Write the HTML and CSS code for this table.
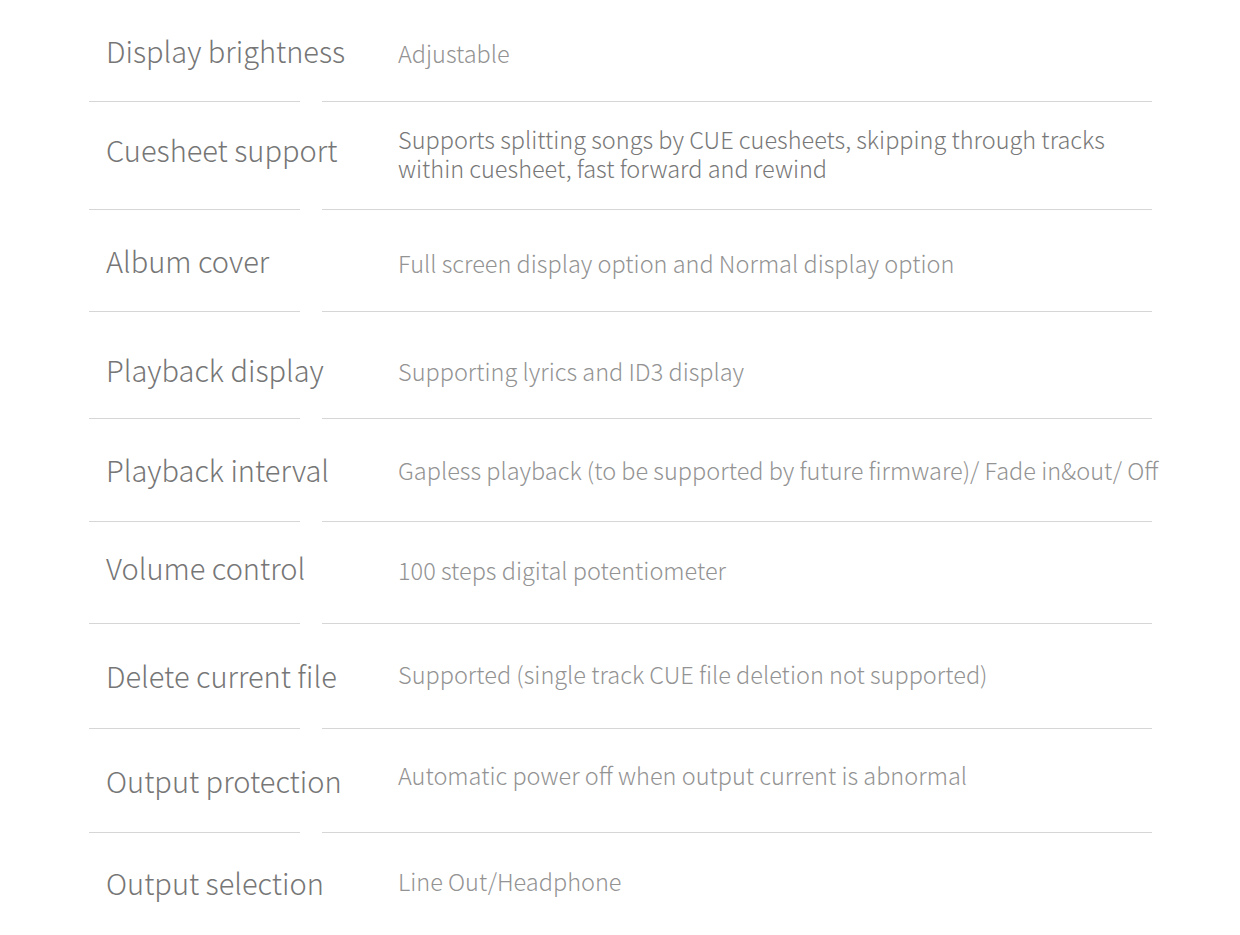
FILE: index.html
```html
<!DOCTYPE html>
<html lang="en">
<head>
<meta charset="utf-8">
<title>Specifications</title>
<link rel="stylesheet" href="styles.css">
</head>
<body>
<div class="specs">
  <div class="label">Display brightness</div>
  <div class="value down-3">Adjustable</div>

  <div class="label up-7">Cuesheet support</div>
  <div class="value value-dark">Supports splitting songs by CUE cuesheets, skipping through tracks<br>within cuesheet, fast forward and rewind</div>

  <div class="label">Album cover</div>
  <div class="value down-3">Full screen display option and Normal display option</div>

  <div class="label down-5">Playback display</div>
  <div class="value down-6">Supporting lyrics and ID3 display</div>

  <div class="label">Playback interval</div>
  <div class="value">Gapless playback (to be supported by future firmware)/ Fade in&amp;out/ Off</div>

  <div class="label up-6">Volume control</div>
  <div class="value up-2">100 steps digital potentiometer</div>

  <div class="label">Delete current file</div>
  <div class="value up-2">Supported (single track CUE file deletion not supported)</div>

  <div class="label">Output protection</div>
  <div class="value up-5">Automatic power off when output current is abnormal</div>

  <div class="label last up-3">Output selection</div>
  <div class="value last up-3">Line Out/Headphone</div>
</div>
</body>
</html>
```

FILE: styles.css
```css
html, body {
  margin: 0;
  padding: 0;
  background: #ffffff;
}

body {
  font-family: "Noto Sans CJK SC", "Noto Sans", sans-serif;
  font-weight: 300;
  overflow: hidden;
}

.specs {
  margin-left: 89px;
  width: 1063px;
  display: grid;
  grid-template-columns: 211px 830px;
  grid-template-rows: 102px 108px 102px 107px 103px 102px 105px 104px 103px;
  column-gap: 22px;
}

.label,
.value {
  display: flex;
  align-items: center;
  box-sizing: border-box;
  border-bottom: 1px solid #d6d6d6;
  white-space: nowrap;
}

.label {
  padding-left: 17px;
  padding-bottom: 2px;
  font-size: 29px;
  color: #767676;
}

.value {
  padding-left: 76px;
  font-size: 23.5px;
  line-height: 29px;
  color: #939393;
}

.value-dark {
  color: #787878;
  padding-bottom: 4px;
}

.up-2 { padding-bottom: 4px; }
.up-3 { padding-bottom: 6px; }
.up-5 { padding-bottom: 10px; }
.up-6 { padding-bottom: 12px; }
.up-7 { padding-bottom: 14px; }
.down-3 { padding-top: 6px; }
.down-5 { padding-top: 10px; }
.down-6 { padding-top: 12px; }

.last {
  border-bottom: none;
}
```
